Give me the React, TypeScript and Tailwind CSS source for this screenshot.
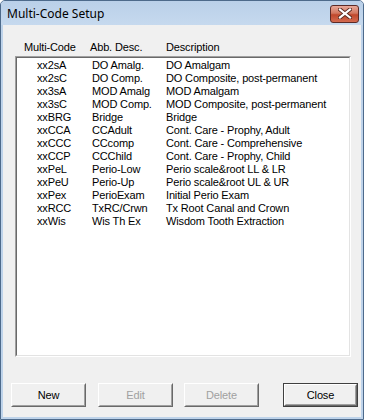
import React from "react";

const rows: [string, string, string][] = [
  ["xx2sA", "DO Amalg.", "DO Amalgam"],
  ["xx2sC", "DO Comp.", "DO Composite, post-permanent"],
  ["xx3sA", "MOD Amalg", "MOD Amalgam"],
  ["xx3sC", "MOD Comp.", "MOD Composite, post-permanent"],
  ["xxBRG", "Bridge", "Bridge"],
  ["xxCCA", "CCAdult", "Cont. Care - Prophy, Adult"],
  ["xxCCC", "CCcomp", "Cont. Care - Comprehensive"],
  ["xxCCP", "CCChild", "Cont. Care - Prophy, Child"],
  ["xxPeL", "Perio-Low", "Perio scale&root LL & LR"],
  ["xxPeU", "Perio-Up", "Perio scale&root UL & UR"],
  ["xxPex", "PerioExam", "Initial Perio Exam"],
  ["xxRCC", "TxRC/Crwn", "Tx Root Canal and Crown"],
  ["xxWis", "Wis Th Ex", "Wisdom Tooth Extraction"],
];

function Btn({ label, disabled, def }: { label: string; disabled?: boolean; def?: boolean }) {
  const inner = (
    <div className="h-full w-full border border-t-white border-l-white border-r-[#696969] border-b-[#696969]">
      <div className="h-full w-full border border-t-[#f0f0f0] border-l-[#f0f0f0] border-r-[#a0a0a0] border-b-[#a0a0a0] bg-[#f0f0f0] flex items-center justify-center">
        <span className={disabled ? "text-[#a0a0a0]" : "text-black"}>{label}</span>
      </div>
    </div>
  );
  return (
    <div className={"w-[75px] h-[24px] " + (def ? "border border-[#404040]" : "")}>{inner}</div>
  );
}

export default function App() {
  return (
    <div
      className="w-[365px] h-[420px] bg-white text-[11px] leading-[13px] text-black tracking-[-0.15px]"
      style={{ fontFamily: '"Liberation Sans", Arial, sans-serif' }}
    >
      <div className="w-[364px] h-[420px] border border-[#4d6a8b] rounded-t-[5px] bg-[#bed3ea] flex flex-col overflow-hidden">
        <div className="h-[24px] flex items-center justify-between pl-[6px] pr-[4px] bg-[linear-gradient(#bad0e9,#c6d9ee)]">
          <span className="text-[12px] leading-[14px] text-black mt-[2px] tracking-normal" style={{ fontFamily: '"Noto Sans", "Liberation Sans", sans-serif' }}>
            Multi-Code Setup
          </span>
          <div className="w-[29px] h-[18px] mt-[1px] rounded-[3px] border border-[#5c2a26] bg-[linear-gradient(#e9a99a_0%,#d2775f_45%,#c0482c_55%,#d46b50_100%)] flex items-center justify-center">
            <svg width="14" height="11" viewBox="0 0 14 11">
              <path d="M2 1.5 L12 9.5 M12 1.5 L2 9.5" stroke="#5a2a20" strokeWidth="4" strokeLinecap="square" />
              <path d="M2 1.5 L12 9.5 M12 1.5 L2 9.5" stroke="#ffffff" strokeWidth="2.2" strokeLinecap="square" />
            </svg>
          </div>
        </div>
        <div className="flex-1 mx-[2px] mb-[2px] bg-[#f0f0f0] flex flex-col">
          <div className="flex pl-[21px] pt-[16px] h-[31px]">
            <span className="w-[66px]">Multi-Code</span>
            <span className="w-[76px]">Abb. Desc.</span>
            <span>Description</span>
          </div>
          <div className="ml-[12px] w-[336px] h-[301px] border border-t-[#a0a0a0] border-l-[#a0a0a0] border-r-white border-b-white">
            <div className="h-full w-full border border-t-[#696969] border-l-[#696969] border-r-[#e3e3e3] border-b-[#e3e3e3] bg-white pt-[1px] pl-[20px]">
              {rows.map((r) => (
                <div key={r[0]} className="flex h-[13px] whitespace-nowrap">
                  <span className="w-[55px]">{r[0]}</span>
                  <span className="w-[74px]">{r[1]}</span>
                  <span>{r[2]}</span>
                </div>
              ))}
            </div>
          </div>
          <div className="flex pl-[8px] mt-[26px]">
            <Btn label="New" />
            <div className="w-[12px]" />
            <Btn label="Edit" disabled />
            <div className="w-[11px]" />
            <Btn label="Delete" disabled />
            <div className="w-[24px]" />
            <Btn label="Close" def />
          </div>
        </div>
      </div>
    </div>
  );
}
